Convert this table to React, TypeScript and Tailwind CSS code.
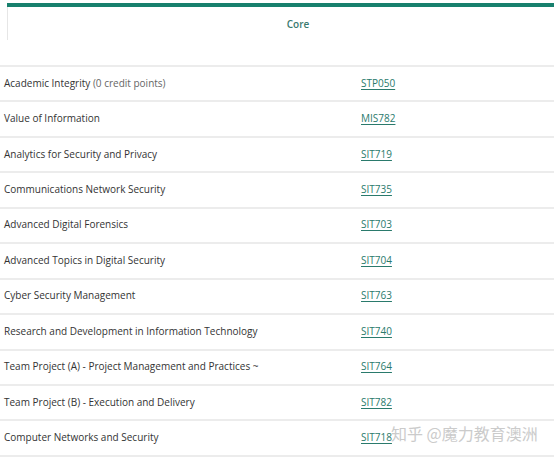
import React from "react";

const rows: { name: React.ReactNode; code: string }[] = [
  { name: <>Academic Integrity <span className="text-[#666]">(0 credit points)</span></>, code: "STP050" },
  { name: "Value of Information", code: "MIS782" },
  { name: "Analytics for Security and Privacy", code: "SIT719" },
  { name: "Communications Network Security", code: "SIT735" },
  { name: "Advanced Digital Forensics", code: "SIT703" },
  { name: "Advanced Topics in Digital Security", code: "SIT704" },
  { name: "Cyber Security Management", code: "SIT763" },
  { name: "Research and Development in Information Technology", code: "SIT740" },
  { name: "Team Project (A) - Project Management and Practices ~", code: "SIT764" },
  { name: "Team Project (B) - Execution and Delivery", code: "SIT782" },
  { name: "Computer Networks and Security", code: "SIT718" },
];

export default function App() {
  return (
    <div
      className="relative w-[554px] h-[457px] overflow-hidden bg-white text-[#333]"
      style={{ fontFamily: '"Open Sans", "Noto Sans", sans-serif' }}
    >
      <div className="pt-[3px]">
        <div className="ml-[7px] h-[4px] bg-[#17806d]" />
        <div className="ml-[7px] h-[33px] border-l border-[#e6e6e6] flex items-start justify-center pl-[34px]">
          <span className="mt-[11px] text-[10px] leading-[12px] font-semibold text-[#3a7a6e]">Core</span>
        </div>
        <div className="h-[25px]" />
      </div>
      <div className="border-t-2 border-[#ececec]">
        {rows.map((r, i) => (
          <div
            key={i}
            className="h-[35.45px] box-border border-b-2 border-[#ececec] flex items-center text-[10px]"
          >
            <div className="w-[361px] pl-[4px] -mt-[1px]">{r.name}</div>
            <a className="-mt-[1px] text-[#2a7a6c] underline underline-offset-2">{r.code}</a>
          </div>
        ))}
      </div>
      <div
        className="absolute left-[391px] top-[422px] text-[16px] leading-[22px] text-[#cbcbcb] whitespace-nowrap"
        style={{ fontFamily: '"Noto Sans CJK SC", sans-serif' }}
      >
        知乎 @魔力教育澳洲
      </div>
    </div>
  );
}
